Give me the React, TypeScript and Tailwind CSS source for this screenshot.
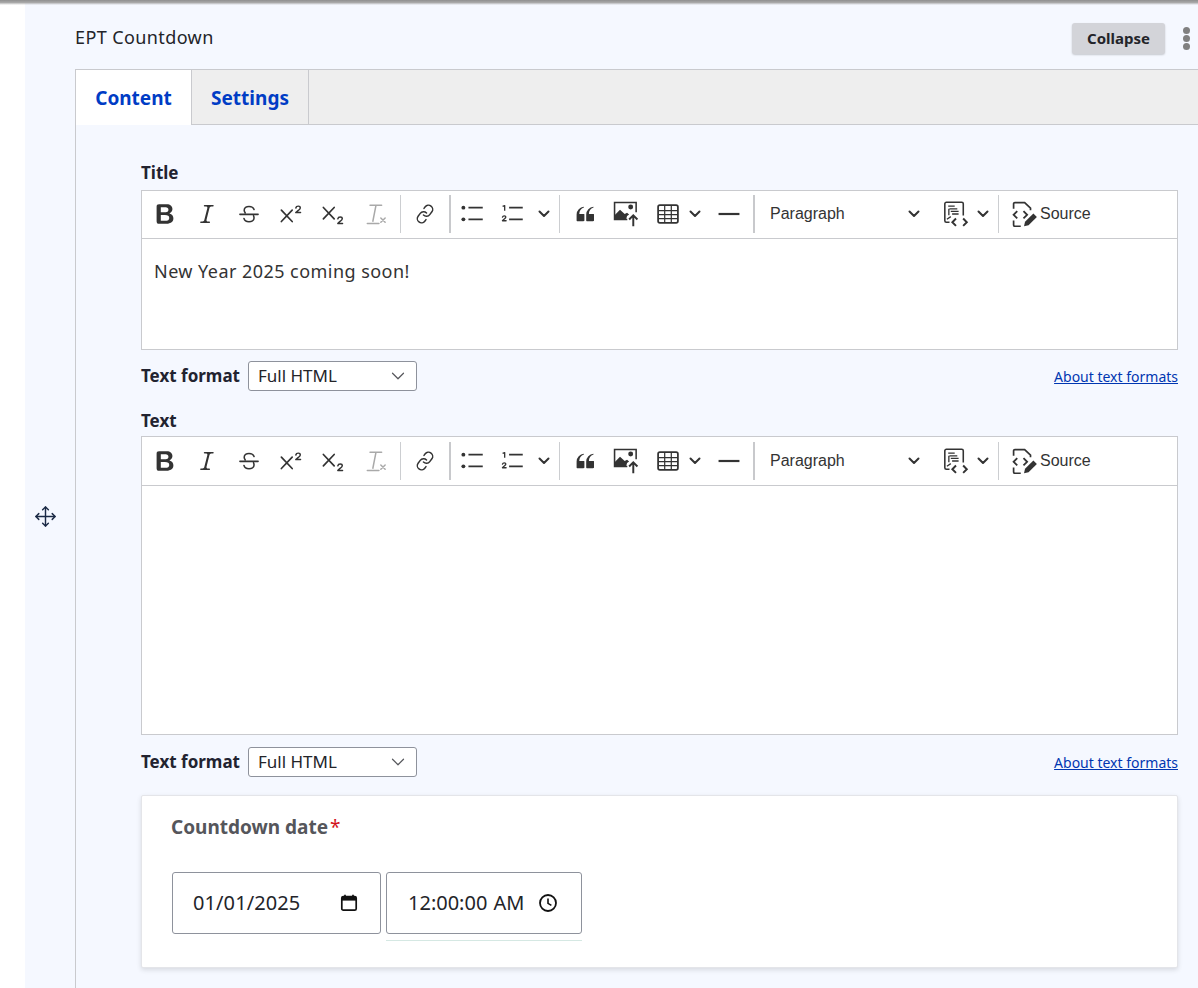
import React from "react";
import { Link as LinkIcon, ChevronDown, Move } from "lucide-react";

const Ic = ({ children, size = 20 }: { children: React.ReactNode; size?: number }) => (
  <svg width={size} height={size} viewBox="0 0 20 20" fill="none" stroke="none" className="text-[#333] shrink-0">
    {children}
  </svg>
);

const Chev = () => (
  <svg width="12" height="8" viewBox="0 0 12 8" fill="none" className="shrink-0">
    <path d="M1.5 1.5 6 6l4.5-4.5" stroke="#333" strokeWidth="2" strokeLinecap="round" strokeLinejoin="round" />
  </svg>
);

const Sep = ({ thick }: { thick?: boolean }) => (
  <div className={thick ? "w-[2px] h-[38px] bg-[#c8c9cc] shrink-0" : "w-px h-[38px] bg-[#ccced1] shrink-0"} />
);

const Toolbar = ({ h }: { h: string }) => (
  <div className={`flex items-center pl-[2px] border-b border-[#c9cace] ${h}`}>
    <div className="w-[42px] flex justify-center">
      <Ic size={28}>
        <path fill="#333" d="M10.187 17H5.773c-.637 0-1.092-.138-1.364-.415-.273-.277-.409-.718-.409-1.323V4.738c0-.617.14-1.062.419-1.332.279-.27.73-.406 1.354-.406h4.68c.69 0 1.288.041 1.793.124.506.083.96.242 1.36.478.341.197.644.447.906.75a3.262 3.262 0 0 1 .808 2.162c0 1.401-.722 2.426-2.167 3.075C15.05 10.175 16 11.315 16 13.01a3.756 3.756 0 0 1-2.296 3.504 6.1 6.1 0 0 1-1.517.377c-.571.073-1.238.11-2 .11zm-.217-6.217H7v4.087h3.069c1.977 0 2.965-.69 2.965-2.072 0-.707-.256-1.22-.768-1.537-.512-.319-1.277-.478-2.296-.478zM7 5.13v3.619h2.606c.729 0 1.292-.067 1.69-.2a1.6 1.6 0 0 0 .91-.765c.165-.267.247-.566.247-.897 0-.707-.26-1.176-.778-1.409-.519-.232-1.31-.348-2.375-.348H7z" />
      </Ic>
    </div>
    <div className="w-[42px] flex justify-center">
      <Ic size={26}>
        <path fill="#333" d="m9.586 14.633.021.004c-.036.335.095.655.393.962.082.083.173.15.274.201h1.474a.6.6 0 1 1 0 1.2H5.304a.6.6 0 0 1 0-1.2h1.15c.474-.07.809-.182 1.005-.334.157-.122.291-.32.404-.597l2.416-9.55a1.053 1.053 0 0 0-.281-.823 1.12 1.12 0 0 0-.442-.296H8.15a.6.6 0 0 1 0-1.2h6.443a.6.6 0 1 1 0 1.2h-1.195c-.376.056-.65.155-.823.296-.215.175-.423.439-.623.79l-2.366 9.347z" />
      </Ic>
    </div>
    <div className="w-[42px] flex justify-center">
      <Ic size={24}>
        <path stroke="#333" strokeWidth="1.3" strokeLinecap="round" d="M14.2 6.2c-.5-1.5-2-2.5-4.2-2.5S6 4.9 6 6.8c0 .9.3 1.5.8 2.1M2.4 10.3h15.2M5.8 13.7c.4 1.7 2.1 2.8 4.2 2.8s4.2-1.1 4.2-3.2c0-.7-.1-1.3-.4-1.8" />
      </Ic>
    </div>
    <div className="w-[42px] flex justify-center">
      <Ic size={27}>
        <path stroke="#333" strokeWidth="1.25" strokeLinecap="round" d="M2.5 6.8l8 8.4M10.5 6.8l-8 8.4" />
        <path stroke="#333" strokeWidth="1.1" strokeLinecap="round" strokeLinejoin="round" d="M13.2 5.2c.2-1 1-1.4 1.8-1.4s1.5.5 1.5 1.3c0 1.3-2 2-3.3 3.5h3.5" />
      </Ic>
    </div>
    <div className="w-[42px] flex justify-center">
      <Ic size={27}>
        <path stroke="#333" strokeWidth="1.25" strokeLinecap="round" d="M2.5 4.8l8 8.4M10.5 4.8l-8 8.4" />
        <path stroke="#333" strokeWidth="1.1" strokeLinecap="round" strokeLinejoin="round" d="M13.2 13.2c.2-1 1-1.4 1.8-1.4s1.5.5 1.5 1.3c0 1.3-2 2-3.3 3.5h3.5" />
      </Ic>
    </div>
    <div className="w-[44px] flex justify-center">
      <Ic size={27}>
        <path stroke="#a9a9a9" strokeWidth="1.1" strokeLinecap="round" d="M5.2 3.2h8.6M9.6 3.2 7.3 15M3.2 16.6h8.6" />
        <path stroke="#a9a9a9" strokeWidth="1.1" strokeLinecap="round" d="M13.2 12.6l3.2 3.2M16.4 12.6l-3.2 3.2" />
      </Ic>
    </div>
    <div className="ml-[2px]"><Sep /></div>
    <div className="w-[48px] flex justify-center">
      <LinkIcon size={20} strokeWidth={1.8} color="#333" className="rotate-[-8deg]" />
    </div>
    <Sep thick />
    <div className="w-[44px] flex justify-center">
      <Ic size={26}>
        <circle cx="2.6" cy="5.1" r="1.5" fill="#333" />
        <circle cx="2.6" cy="14.1" r="1.5" fill="#333" />
        <path stroke="#333" strokeWidth="1.3" d="M6.5 5.1h11M6.5 14.1h11" />
      </Ic>
    </div>
    <div className="w-[36px] flex justify-center">
      <Ic size={26}>
        <path stroke="#333" strokeWidth="1" strokeLinejoin="round" d="M2 4.1 3.6 3.5v4" />
        <path stroke="#333" strokeWidth="1" strokeLinejoin="round" strokeLinecap="round" d="M1.9 12.4c.2-.8.9-1 1.4-1 .7 0 1.2.4 1.2 1 0 1-1.6 1.5-2.6 2.8h2.8" />
        <path stroke="#333" strokeWidth="1.3" d="M7 5.1h10.5M7 14.1h10.5" />
      </Ic>
    </div>
    <div className="w-[26px] flex justify-center"><Chev /></div>
    <div className="ml-[2px]"><Sep /></div>
    <div className="w-[50px] flex justify-center">
      <Ic size={24}>
        <path fill="#333" d="M3 10.423a6.5 6.5 0 0 1 6.056-6.408l.038.67C6.448 5.423 5.354 7.663 5.22 10H9c.552 0 .5.432.5.986v4.511c0 .554-.448.503-1 .503h-5c-.552 0-.5-.449-.5-1.003v-4.574zm8 0a6.5 6.5 0 0 1 6.056-6.408l.038.67c-2.646.739-3.74 2.979-3.873 5.315H17c.552 0 .5.432.5.986v4.511c0 .554-.448.503-1 .503h-5c-.552 0-.5-.449-.5-1.003v-4.574z" />
      </Ic>
    </div>
    <div className="w-[32px] flex justify-center">
      <Ic size={26}>
        <path stroke="#333" strokeWidth="1.2" d="M11 14.2H1.2V1.2h16.6v7.4" />
        <circle cx="13.6" cy="4.6" r="1.9" fill="#333" />
        <path fill="#333" d="M1.2 13.8V11l4.2-4.2 3.6 3.2 1.8-1 1.6 1.4-1.6 1.2-.6 2.2z" />
        <path stroke="#333" strokeWidth="1.5" d="M15.6 19.5v-8.4M12.4 14.2l3.2-3.2 3.2 3.2" />
      </Ic>
    </div>
    <div className="ml-[6px] w-[40px] flex justify-center">
      <Ic size={22}>
        <rect x="1" y="2" width="18" height="16" rx="1.6" stroke="#333" strokeWidth="1.6" />
        <path stroke="#333" strokeWidth="1.1" d="M1 7h18M1 10.5h18M1 14.2h18M7 2v16M13 2v16" />
      </Ic>
    </div>
    <div className="w-[14px] flex justify-center"><Chev /></div>
    <div className="ml-[5px] w-[44px] flex justify-center">
      <Ic size={22}>
        <path stroke="#333" strokeWidth="2" d="M0.5 10h19" />
      </Ic>
    </div>
    <div className="ml-[2px]"><Sep thick /></div>
    <div className="ml-[15px] w-[150px] flex items-center justify-between font-['Liberation_Sans',sans-serif] text-[16px] text-[#333]">
      <span>Paragraph</span>
      <Chev />
    </div>
    <div className="ml-[23px]">
      <Ic size={26}>
        <path stroke="#333" strokeWidth="1.2" d="M5 16.3H2.6a1.2 1.2 0 0 1-1.2-1.2V2.2A1.2 1.2 0 0 1 2.6 1h11.8a1.2 1.2 0 0 1 1.2 1.2v9" />
        <path stroke="#333" strokeWidth="1" d="M4 4h5M5 6h6M6 8h6M7 10h5M4.5 6v5M3 14l3-2" />
        <path stroke="#333" strokeWidth="1.5" d="M10 13.5l-2.8 2.8 2.8 2.8M15.5 13.5l2.8 2.8-2.8 2.8" />
      </Ic>
    </div>
    <div className="ml-[8px] w-[12px]"><Chev /></div>
    <div className="ml-[9px]"><Sep /></div>
    <div className="ml-[12px]">
      <Ic size={26}>
        <path stroke="#333" strokeWidth="1.3" d="M2 6V2.2A1 1 0 0 1 3 1.2h7.5L15 5.5v1.7M2 15v3.4a1 1 0 0 0 1 1h4.5" />
        <path stroke="#333" strokeWidth="1.4" d="M4.8 7.8 2 10.6l2.8 2.8M9.6 7.8l2.8 2.8-2.8 2.8" />
        <path fill="#333" d="M10 19.5l.8-3.5 6.4-6.4 2.7 2.7-6.4 6.4z" />
      </Ic>
    </div>
    <span className="ml-[3px] font-['Liberation_Sans',sans-serif] text-[16px] text-[#333]">Source</span>
  </div>
);

const Format = ({ mt }: { mt: string }) => (
  <div className={`flex items-center justify-between h-[30px] ${mt}`}>
    <div className="flex items-center">
      <span className="w-[107px] font-bold text-[17px] text-[#222330]">Text format</span>
      <div className="w-[169px] h-[30px] bg-white border border-[#8e929c] rounded-[3px] flex items-center justify-between pl-[9px] pr-[7px] text-[17px] text-[#232429]">
        <span>Full HTML</span>
        <ChevronDown size={22} strokeWidth={1.3} color="#55565b" />
      </div>
    </div>
    <a className="text-[14px] text-[#0036b1] underline">About text formats</a>
  </div>
);

export default function App() {
  return (
    <div className="relative w-[1198px] h-[988px] overflow-hidden bg-white font-['Noto_Sans',sans-serif]">
      <div className="absolute top-0 left-0 right-0 h-[5px] bg-gradient-to-b from-[#8f8f8f] via-[#a8a8a8] to-transparent z-10" />
      <div className="ml-[25px] bg-[#f5f8ff] flex">
        <div className="w-[50px] shrink-0 flex items-center justify-center pr-[10px]">
          <Move size={23} strokeWidth={1.5} color="#1b2a45" />
        </div>
        <div className="flex-1 min-w-0">
          <div className="h-[69px] pt-[7px] flex items-center justify-between pr-[8px]">
            <span className="mb-[2px] text-[18px] tracking-[0.4px] text-[#232429]">EPT Countdown</span>
            <div className="flex items-center gap-[18px]">
              <button className="w-[93px] h-[31px] rounded-[3px] bg-[#d3d4d9] shadow-[0_1px_2px_rgba(0,0,0,0.2)] text-[15px] font-bold text-[#232429] flex items-center justify-center">
                Collapse
              </button>
              <div className="flex flex-col gap-[1px]">
                <span className="w-[7px] h-[7px] rounded-full bg-[#808080]" />
                <span className="w-[7px] h-[7px] rounded-full bg-[#808080]" />
                <span className="w-[7px] h-[7px] rounded-full bg-[#808080]" />
              </div>
            </div>
          </div>
          <div className="border-l border-[#c9cace]">
            <div className="flex h-[56px] bg-[#eeeeee] border-t border-b border-[#c9cace]">
              <div className="w-[115px] h-[55px] pt-[2px] bg-white flex items-center justify-center text-[19px] font-bold text-[#003cc5]">
                Content
              </div>
              <div className="w-[118px] pt-[2px] border-l border-r border-[#c9cace] flex items-center justify-center text-[19px] font-bold text-[#003cc5]">
                Settings
              </div>
            </div>
            <div className="pt-[36px] pl-[65px] pr-[20px] pb-[64px]">
              <div className="h-[24px] mb-[5px] flex items-center font-bold text-[17px] text-[#222330]">Title</div>
              <div className="h-[160px] bg-white border border-[#c9cace]">
                <Toolbar h="h-[48px] pb-[1px]" />
                <p className="pl-[12px] pt-[18px] text-[18px] tracking-[0.45px] leading-[28px] text-[#333]">New Year 2025 coming soon!</p>
              </div>
              <Format mt="mt-[11px]" />
              <div className="h-[24px] mt-[18px] mb-[3px] flex items-center font-bold text-[17px] text-[#222330]">Text</div>
              <div className="h-[299px] bg-white border border-[#c9cace]">
                <Toolbar h="h-[49px]" />
              </div>
              <Format mt="mt-[12px]" />
              <div className="mt-[18px] h-[173px] bg-white border border-[#e4e5e9] rounded-[2px] shadow-[0_2px_5px_rgba(0,0,0,0.12)] pl-[30px] pt-[17px]">
                <div className="-ml-px text-[19px] leading-[28px] font-bold text-[#55565b]">
                  Countdown date<span className="text-[#d3141c] font-normal ml-[2px]">*</span>
                </div>
                <div className="flex gap-[5px] mt-[31px]">
                  <div className="w-[209px] h-[62px] border border-[#8e929c] rounded-[3px] flex items-center justify-between pl-[20px] pr-[21px] text-[20px] tracking-[0.1px] text-[#232429]">
                    <span>01/01/2025</span>
                    <svg width="20" height="20" viewBox="0 0 20 20" fill="none">
                      <rect x="2.8" y="3.6" width="14.4" height="13.6" rx="1.5" stroke="#111" strokeWidth="1.7" />
                      <path d="M2.8 4h14.4v3.6H2.8z" fill="#111" />
                      <path d="M6 1.8v2.4M14 1.8v2.4" stroke="#111" strokeWidth="1.7" />
                    </svg>
                  </div>
                  <div>
                    <div className="w-[196px] h-[62px] border border-[#8e929c] rounded-[3px] flex items-center justify-between pl-[21px] pr-[23px] text-[20px] text-[#232429]">
                      <span className="whitespace-pre [word-spacing:1px]">12:00:00 AM</span>
                      <svg width="20" height="20" viewBox="0 0 20 20" fill="none">
                        <circle cx="10" cy="10" r="8" stroke="#111" strokeWidth="1.8" />
                        <path d="M10 5.6V10.4l3.4 2" stroke="#111" strokeWidth="1.6" />
                      </svg>
                    </div>
                    <div className="mt-[6px] h-px bg-[#d5e8e3]" />
                  </div>
                </div>
              </div>
            </div>
          </div>
        </div>
      </div>
    </div>
  );
}
